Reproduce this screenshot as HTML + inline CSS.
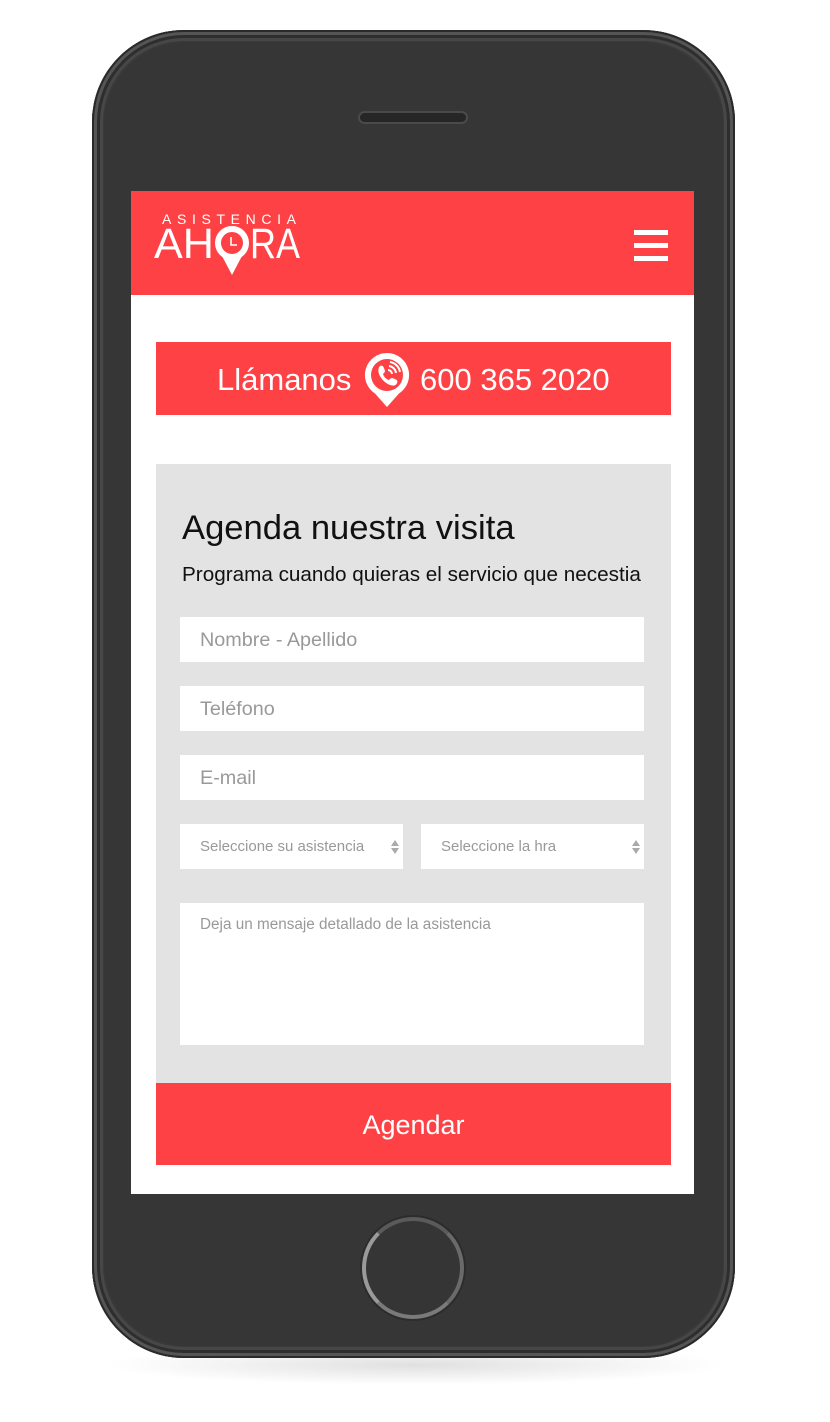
<!DOCTYPE html>
<html><head><meta charset="utf-8"><style>
*{margin:0;padding:0;box-sizing:border-box}
body{width:830px;height:1422px;background:#fff;position:relative;overflow:hidden;font-family:"Liberation Sans",sans-serif}
.shadow{position:absolute;left:100px;top:1345px;width:630px;height:40px;border-radius:50%;background:radial-gradient(ellipse at center,rgba(0,0,0,.12),rgba(0,0,0,0) 70%)}
.phone{position:absolute;left:92px;top:30px;width:643px;height:1328px;border-radius:92px;background:#3a3a3a;box-shadow:inset 0 0 0 2px #2a2a2a,inset 0 0 0 5px #555,inset 0 0 0 8px #2e2e2e,inset 0 0 0 11px #474747}
.phone .inner{position:absolute;left:12px;top:12px;right:12px;bottom:12px;border-radius:82px;background:#363636}
.speaker{position:absolute;left:358px;top:111px;width:110px;height:13px;border-radius:7px;background:#262626;border:2px solid #4a4a4a}
.home{position:absolute;left:362px;top:1217px;width:102px;height:102px;border-radius:50%;border:4px solid #777;border-color:#5a5a5a #6a6a6a #7a7a7a #9a9a9a;background:#353535;box-shadow:0 0 0 2px #2c2c2c}
.screen{position:absolute;left:131px;top:191px;width:563px;height:1003px;background:#fff;overflow:hidden}
.hdr{position:absolute;left:0;top:0;width:563px;height:104px;background:#fd4144}
.ham{position:absolute;left:503px;top:39px;width:34px}
.ham i{display:block;height:5px;background:#fff;margin-bottom:8px}
.call{position:absolute;left:25px;top:151px;width:515px;height:73px;background:#fd4144;color:#fff;font-size:31px}
.call span{position:absolute;top:20px}
.form{position:absolute;left:25px;top:273px;width:515px;height:620px;background:#e3e3e3}
.form h1{position:absolute;left:26px;top:45px;font-weight:normal;font-size:34.6px;color:#111}
.form p{position:absolute;left:26px;top:99px;font-size:20.7px;color:#111}
.in{position:absolute;left:24px;width:464px;height:45px;background:#fff;color:#999;font-size:19.8px;padding:12px 0 0 20px}
.sm{font-size:15px;padding-top:14px}
.arr{position:absolute;right:8px;top:16px;width:0;height:0}
.arr:before{content:"";position:absolute;left:-4px;top:0;border:4px solid transparent;border-bottom:6px solid #aaa;border-top:0}
.arr:after{content:"";position:absolute;left:-4px;top:8px;border:4px solid transparent;border-top:6px solid #aaa;border-bottom:0}
.btn{position:absolute;left:25px;top:892px;width:515px;height:82px;background:#fd4144;color:#fff;font-size:27px;text-align:center;line-height:84px}
</style></head><body>
<div class="shadow"></div>
<div class="phone"><div class="inner"></div></div>
<div class="speaker"></div>
<div class="home"></div>
<div class="screen">
 <div class="hdr">
  <svg style="position:absolute;left:20px;top:18px" width="160" height="70" viewBox="0 0 160 70">
   <text x="11" y="15" fill="#fff" font-family="Liberation Sans" font-size="14" textLength="134" lengthAdjust="spacing">ASISTENCIA</text>
   <text x="3" y="49" fill="#fff" font-family="Liberation Sans" font-size="43" textLength="60" lengthAdjust="spacingAndGlyphs">AH</text>
   <text x="99" y="49" fill="#fff" font-family="Liberation Sans" font-size="43" textLength="50" lengthAdjust="spacingAndGlyphs">RA</text>
   <circle cx="81" cy="34" r="14" fill="none" stroke="#fff" stroke-width="6"/>
   <path d="M71 47l10 19 10-19z" fill="#fff"/>
   <circle cx="81" cy="34" r="9" fill="none" stroke="#fd4144" stroke-width="1"/>
   <path d="M80 28v8h6" fill="none" stroke="#fff" stroke-width="1.6"/>
  </svg>
  <div class="ham"><i></i><i></i><i></i></div>
 </div>
 <div class="call">
  <span style="left:61px">Llámanos</span>
  <svg style="position:absolute;left:207px;top:9px" width="48" height="58" viewBox="0 0 48 58">
   <path d="M24 2a22 22 0 0 1 12 40.5L24 56 12 42.5A22 22 0 0 1 24 2z" fill="#fff"/>
   <circle cx="24" cy="24" r="16" fill="#fd4144"/>
   <path d="M17 15c2-1 3 0 4 2l1 3c0 1-1 2-2 3 1 3 3 5 6 6 1-1 2-2 3-2l3 1c2 1 3 2 2 4-1 3-4 3-7 2-5-2-9-6-11-11-1-3-1-6 1-8z" fill="#fff"/>
   <path d="M26 15a8 8 0 0 1 7 7M27 11a12 12 0 0 1 10 10M25 19a4 4 0 0 1 4 4" fill="none" stroke="#fff" stroke-width="2"/>
  </svg>
  <span style="left:264px">600 365 2020</span>
 </div>
 <div class="form">
  <h1>Agenda nuestra visita</h1>
  <p>Programa cuando quieras el servicio que necestia</p>
  <div class="in" style="top:153px">Nombre - Apellido</div>
  <div class="in" style="top:222px">Teléfono</div>
  <div class="in" style="top:291px">E-mail</div>
  <div class="in sm" style="top:360px;width:223px">Seleccione su asistencia<span class="arr"></span></div>
  <div class="in sm" style="top:360px;left:265px;width:223px">Seleccione la hra<span class="arr"></span></div>
  <div class="in" style="top:439px;height:142px;font-size:15.3px;padding-top:13px">Deja un mensaje detallado de la asistencia</div>
 </div>
 <div class="btn">Agendar</div>
</div>
</body></html>
